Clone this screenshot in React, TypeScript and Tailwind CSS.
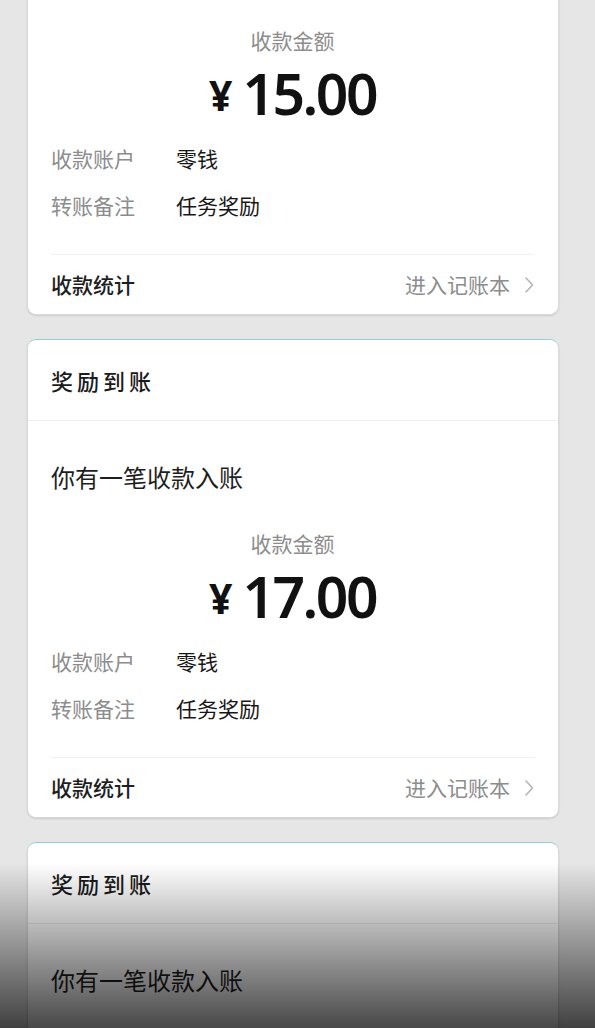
import React from "react";

const cjk = { fontFamily: '"Noto Sans CJK SC", "Noto Sans", sans-serif' };

function Chevron() {
  return (
    <svg width="10" height="18" viewBox="0 0 10 18" fill="none" className="ml-[14px]">
      <polyline points="2,2 8.5,9 2,16" stroke="#b4b4b4" strokeWidth="1.6" strokeLinecap="round" strokeLinejoin="round" />
    </svg>
  );
}

function Card({ amount, first }: { amount: string; first?: boolean }) {
  return (
    <div
      className={`bg-white rounded-[9px] border border-[#d4dada] border-t-[#8fd2d6] shadow-[0_1px_2px_rgba(0,0,0,0.12)] overflow-hidden ${first ? "-mt-[164px]" : ""}`}
    >
      <div className="h-[81px] flex items-center pl-[23px] border-b border-[#efefef]">
        <span className="text-[22px] font-medium tracking-[4px] text-[#1b1b1b]">奖励到账</span>
      </div>
      <div className="pt-[40px] pl-[23px] pr-[24px]">
        <div className="text-[24px] leading-[32px] text-[#1e1e1e]">你有一笔收款入账</div>
        <div className="mt-[36px] text-center text-[21px] leading-[28px] text-[#8c8c8c]">收款金额</div>
        <div className="mt-[9px] h-[60px] flex items-center justify-center text-[#111]">
          <span className="text-[41px] font-bold mr-[10px] leading-none mt-[4px]" style={{ fontFamily: '"Noto Sans", sans-serif' }}>¥</span>
          <span className="text-[57px] font-semibold leading-none tracking-[-2.5px]" style={{ fontFamily: '"Noto Sans", sans-serif' }}>
            {amount}
          </span>
        </div>
        <div className="mt-[21px] flex flex-col gap-[19px]">
          <div className="flex text-[21px] leading-[28px]">
            <span className="w-[125px] text-[#8c8c8c]">收款账户</span>
            <span className="text-[#161616]">零钱</span>
          </div>
          <div className="flex text-[21px] leading-[28px]">
            <span className="w-[125px] text-[#8c8c8c]">转账备注</span>
            <span className="text-[#161616]">任务奖励</span>
          </div>
        </div>
        <div className="mt-[35px] border-t border-[#f0f0f0] h-[60px] flex items-center justify-between">
          <span className="text-[21px] font-medium text-[#1e1e1e]">收款统计</span>
          <span className="flex items-center text-[21px] text-[#8c8c8c]">
            进入记账本
            <Chevron />
          </span>
        </div>
      </div>
    </div>
  );
}

export default function App() {
  return (
    <div className="relative h-[1028px] overflow-hidden bg-[#e6e6e6]" style={cjk}>
      <div className="pl-[27px] pr-[36px] flex flex-col gap-[24px]">
        <Card amount="15.00" first />
        <Card amount="17.00" />
        <Card amount="20.00" />
      </div>
      <div className="pointer-events-none absolute inset-x-0 bottom-0 h-[165px] bg-linear-to-b from-transparent to-[rgba(0,0,0,0.72)]" />
    </div>
  );
}
